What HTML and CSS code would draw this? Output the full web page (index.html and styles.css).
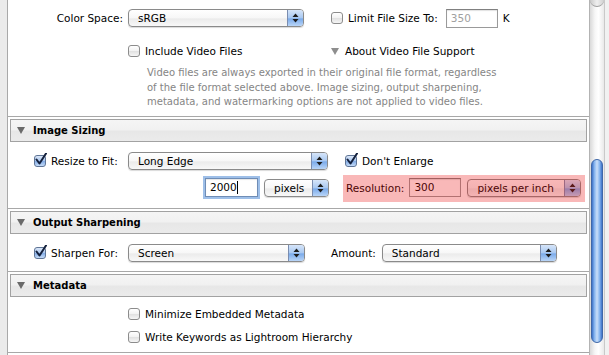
FILE: index.html
```html
<!DOCTYPE html>
<html lang="en">
  <head>
    <meta charset="UTF-8" />
    <title>Export - File Settings</title>
    <link rel="stylesheet" href="styles.css">
  </head>
  <body>
    <div class="window">
      <div class="edge"></div>

      <div class="panel">
        <!-- File Settings (scrolled, header out of view) -->
        <section class="section">
          <div class="body body-file">
            <div class="row row-tall">
              <span class="lead lead-label">Color Space:</span>
              <div class="popup w-color">
                <span class="popup-text">sRGB</span>
                <span class="popup-arrows">
                  <svg width="7" height="10" viewBox="0 0 7 10"><path d="M3.5 0.5 L6.5 4 H0.5 Z M3.5 9.5 L6.5 6 H0.5 Z" fill="#1d1d1d"/></svg>
                </span>
              </div>
              <label class="check limit"><span class="box"></span>Limit File Size To:</label>
              <div class="field field-limit disabled">350</div>
              <span class="unit">K</span>
            </div>

            <div class="row row-check video">
              <label class="check include"><span class="box"></span>Include Video Files</label>
              <span class="disclosure"><span class="tri"></span>About Video File Support</span>
            </div>

            <p class="note">
              Video files are always exported in their original file format, regardless<br>
              of the file format selected above. Image sizing, output sharpening,<br>
              metadata, and watermarking options are not applied to video files.
            </p>
          </div>
        </section>

        <!-- Image Sizing -->
        <section class="section">
          <div class="section-head"><span class="tri tri-dark"></span>Image Sizing</div>
          <div class="body body-sizing">
            <div class="row row-tall">
              <label class="lead lead-check check"><span class="box checked"><svg width="14" height="14" viewBox="0 0 14 14"><path d="M2.5 6.5 L5.5 10.5 L12 0.5" fill="none" stroke="#14213d" stroke-width="2" stroke-linecap="round" stroke-linejoin="round"/></svg></span>Resize to Fit:</label>
              <div class="popup w-resize">
                <span class="popup-text">Long Edge</span>
                <span class="popup-arrows">
                  <svg width="7" height="10" viewBox="0 0 7 10"><path d="M3.5 0.5 L6.5 4 H0.5 Z M3.5 9.5 L6.5 6 H0.5 Z" fill="#1d1d1d"/></svg>
                </span>
              </div>
              <label class="check enlarge"><span class="box checked"><svg width="14" height="14" viewBox="0 0 14 14"><path d="M2.5 6.5 L5.5 10.5 L12 0.5" fill="none" stroke="#14213d" stroke-width="2" stroke-linecap="round" stroke-linejoin="round"/></svg></span>Don't Enlarge</label>
            </div>

            <div class="row row-tall row-gap">
              <div class="field field-size focus">2000<span class="caret"></span></div>
              <div class="popup w-pixels">
                <span class="popup-text">pixels</span>
                <span class="popup-arrows">
                  <svg width="7" height="10" viewBox="0 0 7 10"><path d="M3.5 0.5 L6.5 4 H0.5 Z M3.5 9.5 L6.5 6 H0.5 Z" fill="#1d1d1d"/></svg>
                </span>
              </div>
              <div class="highlight">
                <span class="res-label">Resolution:</span>
                <div class="field field-res">300</div>
                <div class="popup w-ppi">
                  <span class="popup-text">pixels per inch</span>
                  <span class="popup-arrows">
                    <svg width="7" height="10" viewBox="0 0 7 10"><path d="M3.5 0.5 L6.5 4 H0.5 Z M3.5 9.5 L6.5 6 H0.5 Z" fill="#1d1d1d"/></svg>
                  </span>
                </div>
              </div>
            </div>
          </div>
        </section>

        <!-- Output Sharpening -->
        <section class="section">
          <div class="section-head"><span class="tri tri-dark"></span>Output Sharpening</div>
          <div class="body body-sharpen">
            <div class="row row-tall">
              <label class="lead lead-check check"><span class="box checked"><svg width="14" height="14" viewBox="0 0 14 14"><path d="M2.5 6.5 L5.5 10.5 L12 0.5" fill="none" stroke="#14213d" stroke-width="2" stroke-linecap="round" stroke-linejoin="round"/></svg></span>Sharpen For:</label>
              <div class="popup w-screen">
                <span class="popup-text">Screen</span>
                <span class="popup-arrows">
                  <svg width="7" height="10" viewBox="0 0 7 10"><path d="M3.5 0.5 L6.5 4 H0.5 Z M3.5 9.5 L6.5 6 H0.5 Z" fill="#1d1d1d"/></svg>
                </span>
              </div>
              <span class="amount">Amount:</span>
              <div class="popup w-amount">
                <span class="popup-text">Standard</span>
                <span class="popup-arrows">
                  <svg width="7" height="10" viewBox="0 0 7 10"><path d="M3.5 0.5 L6.5 4 H0.5 Z M3.5 9.5 L6.5 6 H0.5 Z" fill="#1d1d1d"/></svg>
                </span>
              </div>
            </div>
          </div>
        </section>

        <!-- Metadata -->
        <section class="section">
          <div class="section-head"><span class="tri tri-dark"></span>Metadata</div>
          <div class="body body-meta">
            <div class="row row-check">
              <label class="check indent"><span class="box"></span>Minimize Embedded Metadata</label>
            </div>
            <div class="row row-check row-gap">
              <label class="check indent"><span class="box"></span>Write Keywords as Lightroom Hierarchy</label>
            </div>
          </div>
        </section>
      </div>

      <div class="scroll">
        <div class="track">
          <div class="cap"></div>
          <div class="thumb"></div>
        </div>
      </div>
    </div>
  </body>
</html>
```

FILE: styles.css
```css
body {
  margin: 0;
  background-color: #ffffff;
  font-family: "DejaVu Sans", sans-serif;
  font-size: 10.5px;
  color: #000;
  overflow: hidden;
}

.window {
  display: flex;
  height: 355px;
}

.edge {
  width: 7px;
  background-color: #ebebeb;
  border-right: 1px solid #a9a9a9;
}

.panel {
  flex: 1;
  background-color: #fff;
}

.scroll {
  width: 20px;
  background-color: #f1f1f1;
}

/* sections */
.section {
  border-bottom: 1px solid #a8a8a8;
}
.section-head {
  margin: 2px 2px 0;
  height: 21px;
  border: 1px solid #a2a2a2;
  background: linear-gradient(#f5f5f5, #f1f1f1 45%, #e7e7e7 55%, #ebebeb);
  display: flex;
  align-items: center;
  font-weight: bold;
  font-size: 10px;
}
.body-file {
  padding: 7px 0 6px;
}
.body-sizing {
  padding: 8px 0 9px;
}
.body-sharpen {
  padding: 8px 0 7px;
}
.body-meta {
  padding: 8px 0 6px;
}

.row {
  display: flex;
  align-items: center;
}
.row-tall {
  height: 22px;
}
.row-check {
  height: 18px;
}
.row-gap {
  margin-top: 5px;
}
.video {
  margin-top: 13px;
}

.lead {
  width: 120px;
  flex-shrink: 0;
  box-sizing: border-box;
}
.lead-label {
  text-align: right;
  padding-right: 5px;
}
.lead-check {
  padding-left: 26px;
}

/* triangles */
.tri {
  width: 0;
  height: 0;
  border-left: 4px solid transparent;
  border-right: 4px solid transparent;
  border-top: 7px solid #8e8e8e;
  margin-right: 6px;
}
.tri-dark {
  border-top-color: #6a6a6a;
  margin-left: 6px;
  margin-right: 8px;
}

/* checkboxes */
.check {
  display: flex;
  align-items: center;
  gap: 5px;
  white-space: nowrap;
}
.box {
  position: relative;
  width: 10px;
  height: 10px;
  border: 1px solid #8c8c8c;
  border-radius: 3px;
  background: linear-gradient(#ffffff, #f2f2f2 50%, #e2e2e2 55%, #f6f6f6);
  flex-shrink: 0;
}
.box.checked {
  border-color: #5f7596;
  background: linear-gradient(#dbe7f8, #a9c6ee 50%, #86aee6 55%, #c4dbf8);
}
.box svg {
  position: absolute;
  left: -1px;
  top: -3px;
}
.limit {
  margin-left: 27px;
}
.enlarge {
  margin-left: 17px;
}
.include {
  margin-left: 120px;
  width: 203px;
}
.indent {
  margin-left: 120px;
}

.disclosure {
  display: flex;
  align-items: center;
}

.unit {
  margin-left: 5px;
}

.note {
  margin: 6px 0 0 139px;
  font-size: 10px;
  line-height: 14.5px;
  color: #858585;
}

/* popup buttons */
.popup {
  height: 16px;
  border: 1px solid #8a8a8a;
  border-radius: 4px;
  display: flex;
  align-items: stretch;
  background: linear-gradient(#ffffff, #f7f7f7 50%, #ebebeb 55%, #f8f8f8);
  box-shadow: 0 1px 1px rgba(0, 0, 0, 0.15);
  overflow: hidden;
  flex-shrink: 0;
}
.popup-text {
  flex: 1;
  padding-left: 9px;
  line-height: 16px;
  white-space: nowrap;
}
.popup-arrows {
  width: 15px;
  border-left: 1px solid #7a8db0;
  background: linear-gradient(#d6e5f9, #a8c8f1 50%, #7aaaea 55%, #b9d5f7);
  display: flex;
  align-items: center;
  justify-content: center;
}
.w-color {
  width: 174px;
}
.w-resize {
  width: 198px;
}
.w-pixels {
  width: 63px;
  margin-left: 6px;
}
.w-ppi {
  width: 112px;
  margin-left: 6px;
}
.w-screen {
  width: 175px;
}
.w-amount {
  width: 173px;
}

.amount {
  margin-left: 26px;
  margin-right: 6px;
}

/* text fields */
.field {
  height: 17px;
  border: 1px solid #9a9a9a;
  border-top-color: #808080;
  box-shadow: inset 0 1px 1px rgba(0, 0, 0, 0.12);
  background-color: #fff;
  padding-left: 4px;
  line-height: 17px;
  box-sizing: content-box;
  flex-shrink: 0;
}
.field.disabled {
  color: #a0a0a0;
}
.field-limit {
  width: 46px;
  margin-left: 8px;
}
.field-size {
  width: 47px;
  margin-left: 197px;
  border-color: #6f8db6;
  box-shadow: 0 0 0 2px #9ebfe8, inset 0 1px 1px rgba(0, 0, 0, 0.1);
  display: flex;
  align-items: center;
}
.caret {
  width: 1px;
  height: 13px;
  background-color: #000;
}
.field-res {
  width: 46px;
  margin-left: 5px;
}

/* annotation highlight over the resolution controls */
.highlight {
  position: relative;
  display: flex;
  align-items: center;
  margin-left: 14px;
  padding: 0 4px 0 3px;
}
.highlight::after {
  content: "";
  position: absolute;
  left: 0;
  right: 0;
  top: -3px;
  bottom: -5px;
  background-color: rgba(236, 20, 20, 0.3);
}

/* scroll bar */
.track {
  width: 14px;
  height: 100%;
  border-left: 1px solid #b3b3b3;
  border-right: 1px solid #c9c9c9;
  background: linear-gradient(90deg, #d9d9d9, #f6f6f6 35%, #ffffff 60%, #e9e9e9);
  display: flex;
  flex-direction: column;
}
.cap {
  height: 6px;
  border-bottom: 1px solid #9c9c9c;
  border-radius: 0 0 7px 7px;
  background: linear-gradient(90deg, #c8c8c8, #efefef 50%, #d0d0d0);
}
.thumb {
  margin: 152px 1px 0;
  height: 184px;
  border-radius: 7px;
  border: 1px solid #3f68a8;
  box-sizing: border-box;
  background: linear-gradient(90deg, #3d73c9, #88b6ef 25%, #c9dff9 50%, #88b6ef 75%, #3d73c9);
}
```
